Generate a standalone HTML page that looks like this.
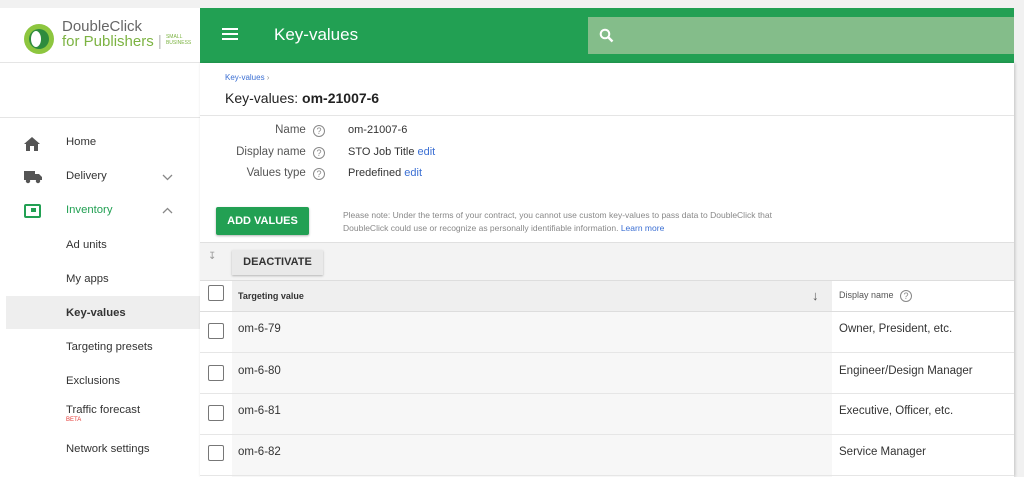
<!DOCTYPE html>
<html><head><meta charset="utf-8"><style>
*{box-sizing:border-box;margin:0;padding:0}
body{width:1024px;height:477px;overflow:hidden;background:#f1f1f1;font-family:"Liberation Sans",Arial,sans-serif;color:#333;position:relative}
.abs{position:absolute}
.side{left:0;top:8px;width:200px;height:469px;background:#fff}
.hdr{left:200px;top:8px;width:814px;height:55px;background:#22a053}
.main{left:200px;top:63px;width:814px;height:414px;background:#fff;box-shadow:1px 0 3px rgba(0,0,0,.2)}
.nav{position:absolute;left:66px;font-size:11.3px;color:#333}
.ico{position:absolute;left:24px}
.lbl{position:absolute;font-size:11.5px;color:#555;text-align:right;width:125px;left:0}
.q{display:inline-block;width:12px;height:12px;border:1px solid #888;border-radius:50%;font-size:9px;line-height:10px;text-align:center;color:#888;margin-left:4px;vertical-align:-1px}
.cb{position:absolute;left:8px;width:16px;height:16px;border:1.5px solid #777;border-radius:2px;background:#fff}
.row{position:absolute;left:0;width:814px;border-bottom:1px solid #e6e6e6}
.tv{position:absolute;left:38px;font-size:11.5px;color:#333}
.dn{position:absolute;left:639px;font-size:11.5px;color:#333}
a{color:#3b6fd3;text-decoration:none}
</style></head><body>
<div class="abs side">
  <div class="abs" style="left:0;top:54px;width:200px;height:1px;background:#e5e5e5"></div>
  <div class="abs" style="left:0;top:109px;width:200px;height:1px;background:#e5e5e5"></div>
  <svg class="abs" style="left:22px;top:15px" width="34" height="32" viewBox="0 0 34 32"><circle cx="17" cy="16" r="15" fill="#8dc63f"/><circle cx="17" cy="16" r="10" fill="#2e8b3d"/><ellipse cx="14" cy="16" rx="5" ry="8" fill="#fff"/><ellipse cx="20" cy="16" rx="4" ry="8" fill="#8dc63f" opacity="0"/></svg>
  <div class="abs" style="left:62px;top:11px;font-size:15px;color:#666;line-height:15px">DoubleClick<br><span style="color:#7cb342">for Publishers</span> <span style="color:#bbb">|</span> <span style="font-size:5px;color:#7cb342;display:inline-block;line-height:6px;vertical-align:2px">SMALL<br>BUSINESS</span></div>
  <svg class="ico" style="top:129px" width="16" height="14" viewBox="0 0 16 14"><path d="M8 0L0 7h2v7h4V9h4v5h4V7h2z" fill="#555"/></svg>
  <div class="nav" style="top:128px">Home</div>
  <svg class="ico" style="top:162px" width="18" height="14" viewBox="0 0 18 14"><path d="M0 1h11v9H0zM11 4h4l3 3v3h-7z" fill="#555"/><circle cx="4" cy="11" r="2.2" fill="#555"/><circle cx="14" cy="11" r="2.2" fill="#555"/></svg>
  <div class="nav" style="top:162px">Delivery</div>
  <svg class="abs" style="left:162px;top:166px" width="11" height="7" viewBox="0 0 11 7"><path d="M1 1l4.5 4.5L10 1" stroke="#888" stroke-width="1.3" fill="none"/></svg>
  <div class="abs" style="left:24px;top:196px;width:17px;height:14px;border:2px solid #22a053;border-radius:2px"><div style="position:absolute;left:5px;top:2px;width:5px;height:4px;background:#22a053"></div></div>
  <div class="nav" style="top:196px;color:#22a053">Inventory</div>
  <svg class="abs" style="left:162px;top:199px" width="11" height="7" viewBox="0 0 11 7"><path d="M1 6l4.5-4.5L10 6" stroke="#888" stroke-width="1.3" fill="none"/></svg>
  <div class="nav" style="top:231px">Ad units</div>
  <div class="nav" style="top:265px">My apps</div>
  <div class="abs" style="left:6px;top:288px;width:194px;height:33px;background:#eee"></div>
  <div class="nav" style="top:299px;font-weight:bold;color:#333">Key-values</div>
  <div class="nav" style="top:333px">Targeting presets</div>
  <div class="nav" style="top:367px">Exclusions</div>
  <div class="nav" style="top:396px">Traffic forecast<br><span style="font-size:6px;color:#e53935;position:relative;top:-4px">BETA</span></div>
  <div class="nav" style="top:435px">Network settings</div>
</div>
<div class="abs hdr">
  <div class="abs" style="left:22px;top:20px;width:16px;height:2px;background:#fff;box-shadow:0 5px 0 #fff,0 10px 0 #fff"></div>
  <div class="abs" style="left:74px;top:17px;font-size:17px;color:#fff">Key-values</div>
  <div class="abs" style="left:388px;top:9px;width:426px;height:37px;background:#84bd8a">
    <svg class="abs" style="left:11px;top:11px" width="15" height="15" viewBox="0 0 15 15"><circle cx="6" cy="6" r="4.3" stroke="#fff" stroke-width="2" fill="none"/><path d="M9 9l4.5 4.5" stroke="#fff" stroke-width="2.4"/></svg>
  </div>
</div>
<div class="abs main">
  <div class="abs" style="left:25px;top:10px;font-size:8px;color:#3b6fd3">Key-values <span style="color:#999">›</span></div>
  <div class="abs" style="left:25px;top:27px;font-size:14px;color:#222">Key-values: <b>om-21007-6</b></div>
  <div class="abs" style="left:0;top:52px;width:814px;height:1px;background:#e5e5e5"></div>
  <div class="lbl" style="top:61px">Name <span class="q">?</span></div>
  <div class="lbl" style="top:83px">Display name <span class="q">?</span></div>
  <div class="lbl" style="top:104px">Values type <span class="q">?</span></div>
  <div class="abs" style="left:148px;top:61px;font-size:11px">om-21007-6</div>
  <div class="abs" style="left:148px;top:83px;font-size:11px">STO Job Title <a>edit</a></div>
  <div class="abs" style="left:148px;top:104px;font-size:11px">Predefined <a>edit</a></div>
  <div class="abs" style="left:16px;top:144px;width:93px;height:28px;background:#22a053;color:#fff;font-weight:bold;font-size:11px;text-align:center;line-height:28px;box-shadow:0 1px 2px rgba(0,0,0,.3);border-radius:2px">ADD VALUES</div>
  <div class="abs" style="left:143px;top:146px;font-size:8.5px;color:#888;line-height:13px">Please note: Under the terms of your contract, you cannot use custom key-values to pass data to DoubleClick that<br>DoubleClick could use or recognize as personally identifiable information. <a>Learn more</a></div>
  <div class="abs" style="left:0;top:179px;width:814px;height:39px;background:#f3f3f3;border-top:1px solid #e0e0e0;border-bottom:1px solid #ddd">
    <div class="abs" style="left:8px;top:8px;font-size:10px;color:#999">&#8615;</div>
    <div class="abs" style="left:32px;top:7px;width:91px;height:25px;background:#e9e9e9;box-shadow:0 1px 2px rgba(0,0,0,.25);font-size:11px;font-weight:bold;color:#333;text-align:center;line-height:25px">DEACTIVATE</div>
  </div>
  <div class="abs" style="left:32px;top:218px;width:600px;height:196px;background:#f7f7f7"></div>
  <div class="row" style="top:218px;height:31px;background:transparent;border-bottom:1px solid #ddd">
    <div class="abs" style="left:32px;top:0;width:600px;height:30px;background:#efefef"></div>
    <div class="cb" style="top:4px"></div>
    <div class="tv" style="top:10px;font-size:9px;font-weight:bold">Targeting value</div>
    <div class="abs" style="left:612px;top:7px;font-size:13px;color:#555">&#8595;</div>
    <div class="dn" style="top:9px;font-size:9px;color:#555">Display name <span class="q">?</span></div>
  </div>
  <div class="row" style="top:249px;height:41px"><div class="cb" style="top:11px"></div><div class="tv" style="top:11px">om-6-79</div><div class="dn" style="top:11px">Owner, President, etc.</div></div>
  <div class="row" style="top:290px;height:41px"><div class="cb" style="top:12px"></div><div class="tv" style="top:12px">om-6-80</div><div class="dn" style="top:12px">Engineer/Design Manager</div></div>
  <div class="row" style="top:331px;height:41px"><div class="cb" style="top:11px"></div><div class="tv" style="top:11px">om-6-81</div><div class="dn" style="top:11px">Executive, Officer, etc.</div></div>
  <div class="row" style="top:372px;height:41px"><div class="cb" style="top:10px"></div><div class="tv" style="top:11px">om-6-82</div><div class="dn" style="top:11px">Service Manager</div></div>
</div>
</body></html>
